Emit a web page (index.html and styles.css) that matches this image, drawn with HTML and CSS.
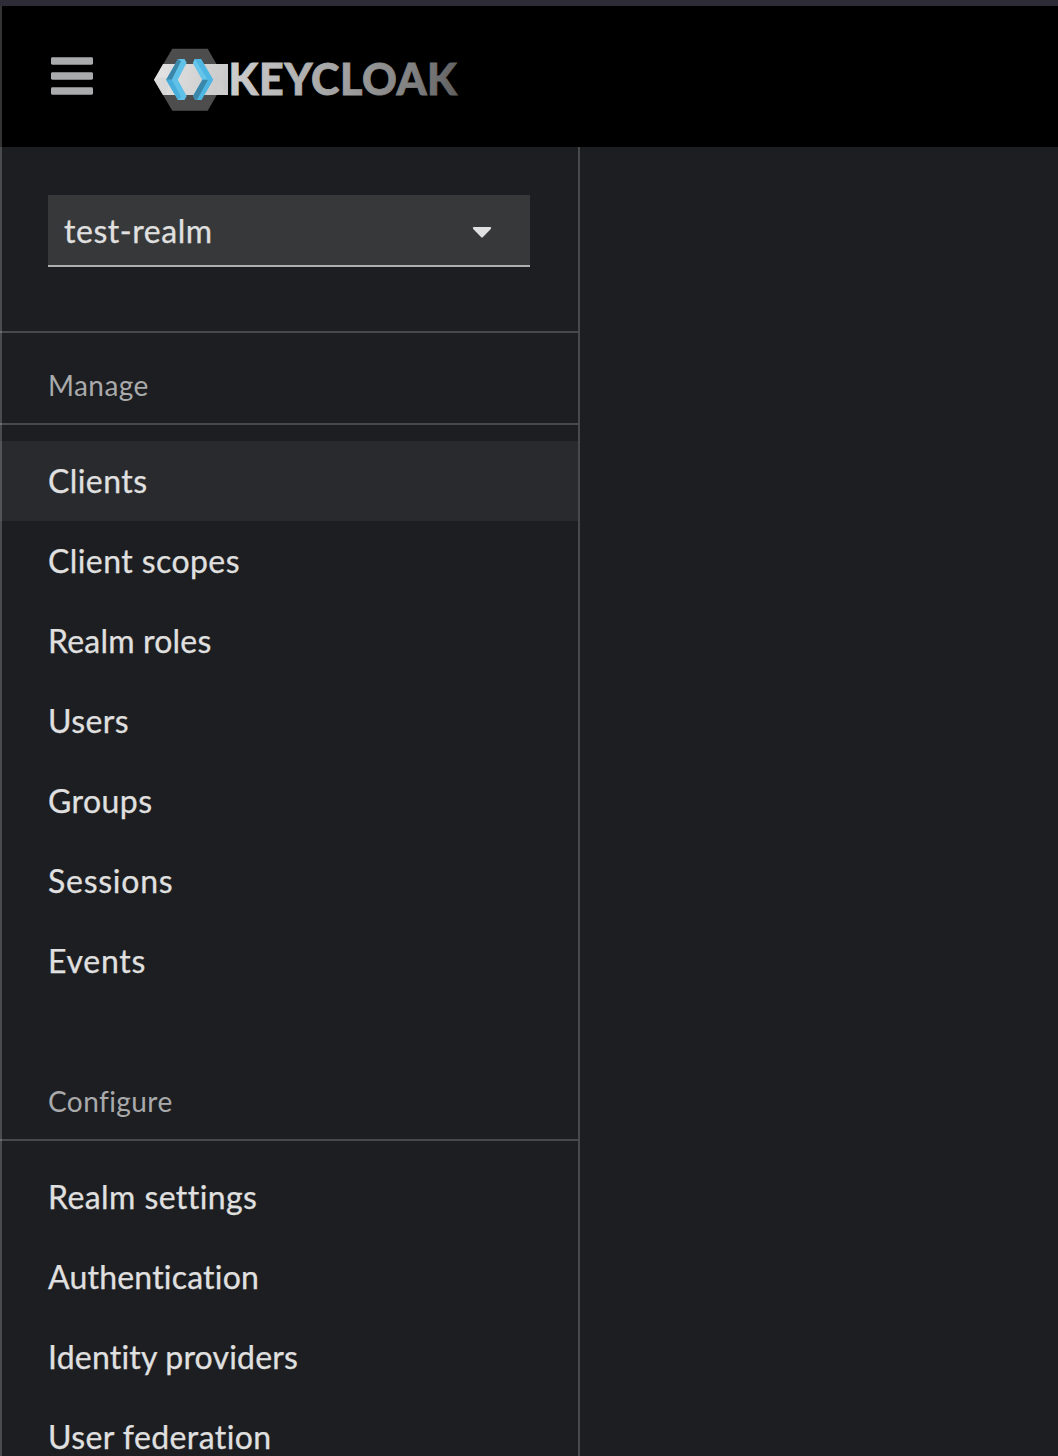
FILE: index.html
```html
<!DOCTYPE html>
<html lang="en">
<head>
<meta charset="utf-8">
<title>Keycloak Administration Console</title>
<link rel="stylesheet" href="styles.css">
</head>
<body>
<div class="window">
  <header class="masthead">
    <button class="menu-toggle" aria-label="Global navigation">
      <svg width="42" height="38" viewBox="0 0 42 38"><g fill="#aaabac"><rect y="0.3" width="42" height="7.400" rx="1.4"/><rect y="15.3" width="42" height="7.400" rx="1.4"/><rect y="30.3" width="42" height="7.400" rx="1.4"/></g></svg>
    </button>
    <svg class="logo" width="306" height="64" viewBox="153 47 306 64" role="img" aria-label="Keycloak">
      <defs>
        <linearGradient id="word" gradientUnits="userSpaceOnUse" x1="230" y1="64" x2="457" y2="95"><stop offset="0" stop-color="#cecece"/><stop offset=".5" stop-color="#a0a0a0"/><stop offset=".8" stop-color="#808080"/><stop offset="1" stop-color="#606060"/></linearGradient>
        <linearGradient id="band" gradientUnits="userSpaceOnUse" x1="154" y1="70" x2="228" y2="90"><stop offset="0" stop-color="#e4e4e4"/><stop offset="1" stop-color="#c8c8c8"/></linearGradient>
      </defs>
      <path fill="#4d4d4d" d="M172.300 48.700h35.400l17.800 31-17.800 31h-35.400l-18.200-31z"/>
      <path fill="url(#band)" d="M163 64h65v31h-65l-9-15.300z"/>
      <path fill="#d0d0d0" d="M163 64l-1 13 8 3-4 15h-3l-9-15.300 8-2.700zM228 64l-8 16 8 15h-14l6-15-8-16z" opacity=".45"/>
      <path fill="#5fc1e8" d="M178 59h6.500l2.200 3.700-8.900 17 8.900 16.300-2.200 4H178l-11.900-20.300z"/>
      <path fill="#3b87aa" d="M178 59l3 2.300-9.200 18.400h-5.700z"/>
      <path fill="#47addb" d="M166.100 79.700h5.700l9.200 17-3 3.300z"/>
      <path fill="#4db6e2" d="M194.800 59h6.400l12.100 20.700-11.800 20.300h-6.300l-2.200-4 9.400-16.300-9.400-16.700z"/>
      <path fill="#66c5eb" d="M193 63l1.800-4 13 20.700h-5.400z"/>
      <path fill="#3b87aa" d="M202.400 79.700h5.600l-11 20h-1.800L193 96z"/>
      <text x="228.500" y="95" class="wordmark" textLength="228.500" fill="url(#word)" stroke="url(#word)" stroke-width=".8">KEYCLOAK</text>
    </svg>
  </header>
  <div class="page">
    <aside class="sidebar">
      <div class="realm">
        <button class="realm-select"><span>test-realm</span>
          <svg class="caret" width="20" height="11" viewBox="0 0 20 11"><path fill="#e0e0e0" d="M1.500 0h17q1.200.600.300 2L11 10q-1 1-2 0L1.200 2Q.300.600 1.500 0z"/></svg>
        </button>
      </div>
      <nav class="section">
        <h2 class="heading">Manage</h2>
        <a class="item current">Clients</a>
        <a class="item">Client scopes</a>
        <a class="item snug">Realm roles</a>
        <a class="item">Users</a>
        <a class="item">Groups</a>
        <a class="item loose">Sessions</a>
        <a class="item loose">Events</a>
      </nav>
      <nav class="section">
        <h2 class="heading">Configure</h2>
        <a class="item">Realm settings</a>
        <a class="item snug">Authentication</a>
        <a class="item snug">Identity providers</a>
        <a class="item">User federation</a>
      </nav>
    </aside>
    <main class="content"></main>
  </div>
</div>
</body>
</html>
```
FILE: styles.css
```css
* { box-sizing: border-box; }
body { margin: 0; background: #1d1e21; color: #e0e0e0; font-family: Lato, sans-serif; font-variant-ligatures: none; letter-spacing: .42px; }
button { border: 0; background: none; padding: 0; color: inherit; font: inherit; letter-spacing: inherit; }
svg { display: block; }
.window { position: relative; height: 1456px; overflow: hidden; display: flex; flex-direction: column; border-top: 6px solid #2c2b36; }
.window::before { content: ""; position: absolute; z-index: 1; left: 0; top: -6px; bottom: 0; width: 2px; background: rgba(255, 255, 255, .2); }
.masthead { flex: none; height: 141px; background: #000; display: flex; align-items: flex-start; gap: 60px; padding: 41px 51px; }
.menu-toggle { margin-top: 10px; }
.page { flex: 1; min-height: 0; display: flex; }
.sidebar { width: 580px; border-right: 2px solid #48494b; }
.content { flex: 1; }
.realm { height: 186px; padding: 48px; border-bottom: 2px solid #48494b; }
.realm-select { width: 482px; height: 72px; padding: 1px 38px 0 16px; display: flex; align-items: center; justify-content: space-between; background: #373839; border-bottom: 2px solid #aeadb0; font-size: 32px; }
.realm-select span { letter-spacing: .55px; -webkit-text-stroke: .25px; }
.caret { margin-top: 3px; }
.heading { margin: 0 0 16px; height: 92px; padding: 32px 48px 0; border-bottom: 2px solid #48494b; font-size: 28px; line-height: 40px; font-weight: 400; color: #a9aaab; }
.section + .section { margin-top: 48px; }
.item { display: block; height: 80px; padding: 0 48px; line-height: 80px; font-size: 32px; -webkit-text-stroke: .25px; }
.item.current { background: #292a2d; }
.item.loose { letter-spacing: .75px; }
.item.snug { letter-spacing: .2px; }
.wordmark { font: 900 43px Lato, sans-serif; letter-spacing: 0; }
```
